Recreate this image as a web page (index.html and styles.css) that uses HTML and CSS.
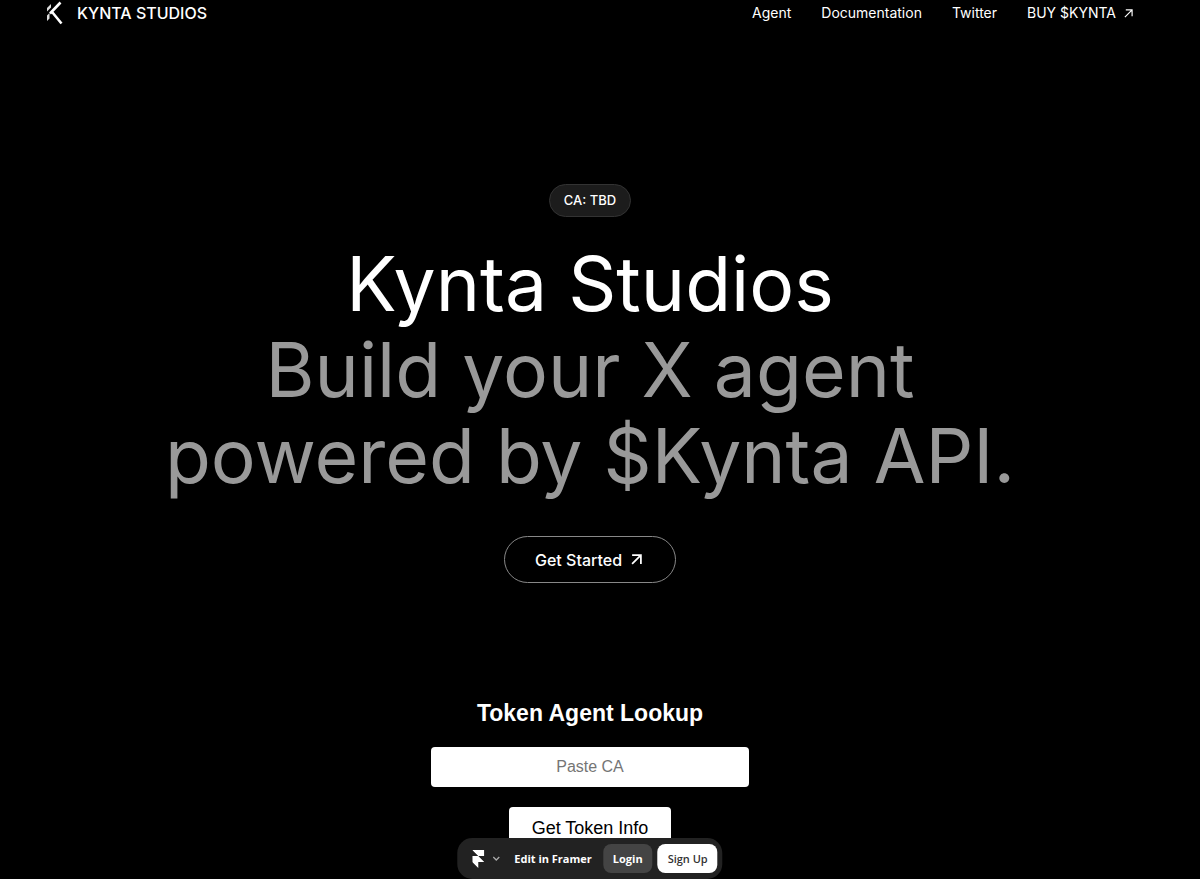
FILE: index.html
```html
<!DOCTYPE html>
<html lang="en">
  <head>
    <meta charset="utf-8" />
    <meta name="viewport" content="width=device-width, initial-scale=1" />
    <title>Kynta Studios</title>
    <link rel="stylesheet" href="styles.css">
  </head>

  <body>
    <header class="header">
      <a class="brand" href="#">
        <svg class="brand-logo" viewBox="0 0 18 24" aria-hidden="true">
          <path d="M14.5 1.5 4 12.5M6.5 11.5 15.5 22.5" fill="none" stroke="#fff" stroke-width="2.6" />
          <path d="M1 10.5V7L5 3V6.500Z M1 20V14.500L3.500 12V17.500Z" fill="#ddd" />
        </svg>
        KYNTA STUDIOS
      </a>
      <nav class="nav">
        <a href="#">Agent</a>
        <a href="#">Documentation</a>
        <a href="#">Twitter</a>
        <a class="nav-buy" href="#">
          BUY $KYNTA
          <svg class="nav-arrow" viewBox="0 0 10 10" aria-hidden="true">
            <path d="M1 9 9 1M2 1H9V8" />
          </svg>
        </a>
      </nav>
    </header>

    <main class="main">
      <section class="hero">
        <span class="badge">CA: TBD</span>
        <h1 class="title">
          Kynta Studios
          <span class="title-muted">Build your X agent<br />powered by $Kynta API.</span>
        </h1>
        <a class="cta" href="#">
          Get Started
          <svg class="cta-arrow" viewBox="0 0 10 10" aria-hidden="true">
            <path d="M1 9 9 1M1 1H9V9" />
          </svg>
        </a>
      </section>

      <form class="lookup">
        <h2 class="lookup-title"><label for="token-input">Token Agent Lookup</label></h2>
        <input class="lookup-input" id="token-input" type="text" placeholder="Paste CA" />
        <button class="lookup-button" type="button">Get Token Info</button>
      </form>
    </main>

    <div class="toolbar">
      <button class="toolbar-menu" type="button" aria-label="Framer menu">
        <svg class="framer-logo" viewBox="0 0 12 18" aria-hidden="true">
          <path d="M0 0H12V6H6ZM0 6H6L12 12H6V18L0 12Z" fill="#fff" />
        </svg>
        <svg class="chevron" viewBox="0 0 8 5" aria-hidden="true">
          <path d="M1 1 4 4 7 1" fill="none" stroke="#aaa" stroke-width="1.3" />
        </svg>
      </button>
      <a class="toolbar-edit" href="#">Edit in Framer</a>
      <button class="toolbar-button" type="button">Login</button>
      <button class="toolbar-button toolbar-signup" type="button">Sign Up</button>
    </div>
  </body>
</html>
```
FILE: styles.css
```css
* {
  box-sizing: border-box;
}
html {
  background: #000;
}
body {
  margin: 0;
  padding-right: 20px;
  min-height: 100vh;
  overflow: hidden;
  background: #000;
  color: #fff;
  font-family: Inter, sans-serif;
}
a {
  color: inherit;
  text-decoration: none;
}

/* header */
.header {
  display: flex;
  align-items: center;
  justify-content: space-between;
  height: 26px;
  padding: 0 47px 0 46px;
}
.brand {
  display: flex;
  align-items: center;
  gap: 13px;
  font-size: 16px;
  font-weight: 500;
}
.brand-logo {
  width: 18px;
  height: 24px;
}
.nav {
  display: flex;
  align-items: center;
  gap: 30px;
  font-size: 14px;
  line-height: 16px;
}
.nav-buy {
  display: flex;
  align-items: center;
  gap: 8px;
}
.nav-arrow,
.cta-arrow {
  width: 9px;
  height: 9px;
  fill: none;
  stroke: #fff;
  stroke-width: 1.3;
}

/* hero */
.hero {
  display: flex;
  flex-direction: column;
  align-items: center;
  padding-top: 158px;
}
.badge {
  padding: 0 14px;
  border: 1px solid #333;
  border-radius: 17px;
  background: #1c1c1c;
  font-size: 13px;
  font-weight: 500;
  line-height: 31px;
}
.title {
  margin: 24px 0 37px;
  font-size: 75px;
  font-weight: 400;
  line-height: 86px;
  text-align: center;
}
.title-muted {
  display: block;
  color: #999;
}
.cta {
  display: flex;
  align-items: center;
  gap: 9px;
  height: 47px;
  padding: 0 33px 0 30px;
  border: 1px solid #888;
  border-radius: 24px;
  font-size: 16px;
  font-weight: 500;
}
.cta-arrow {
  width: 11px;
  height: 11px;
  stroke-width: 1.6;
}

/* token lookup */
.lookup {
  display: flex;
  flex-direction: column;
  align-items: center;
  padding-top: 116px;
  font-family: Arial, "Liberation Sans", sans-serif;
}
.lookup-title {
  margin: 0 0 20px;
  font-size: 23px;
  line-height: 28px;
}
.lookup-input {
  width: 318px;
  height: 40px;
  border: 0;
  border-radius: 4px;
  background: #fff;
  font: 16px Arial, "Liberation Sans", sans-serif;
  text-align: center;
}
.lookup-button {
  height: 42px;
  margin-top: 20px;
  padding: 0 23px;
  border: 0;
  border-radius: 4px;
  background: #fff;
  color: #000;
  font: 18px Arial, "Liberation Sans", sans-serif;
}

/* editor bar pinned to the bottom of the window */
.toolbar {
  position: fixed;
  bottom: 0;
  left: calc(50% - 10px);
  transform: translateX(-50%);
  display: flex;
  align-items: center;
  height: 41px;
  padding: 0 5px 0 15px;
  border-radius: 15px;
  background: #222;
  font: 700 11px "Open Sans", "Noto Sans", sans-serif;
  white-space: nowrap;
}
.toolbar-menu {
  display: flex;
  align-items: center;
  gap: 8px;
  padding: 0;
  border: 0;
  background: none;
}
.framer-logo {
  width: 12px;
  height: 18px;
}
.chevron {
  width: 8px;
  height: 5px;
}
.toolbar-edit {
  margin: 0 11px 0 14px;
}
.toolbar-button {
  height: 29px;
  padding: 0 10px;
  border: 0;
  border-radius: 8px;
  background: #444;
  color: #fff;
  font: inherit;
}
.toolbar-signup {
  margin-left: 5px;
  background: #fff;
  color: #333;
  font-weight: 600;
}
```
